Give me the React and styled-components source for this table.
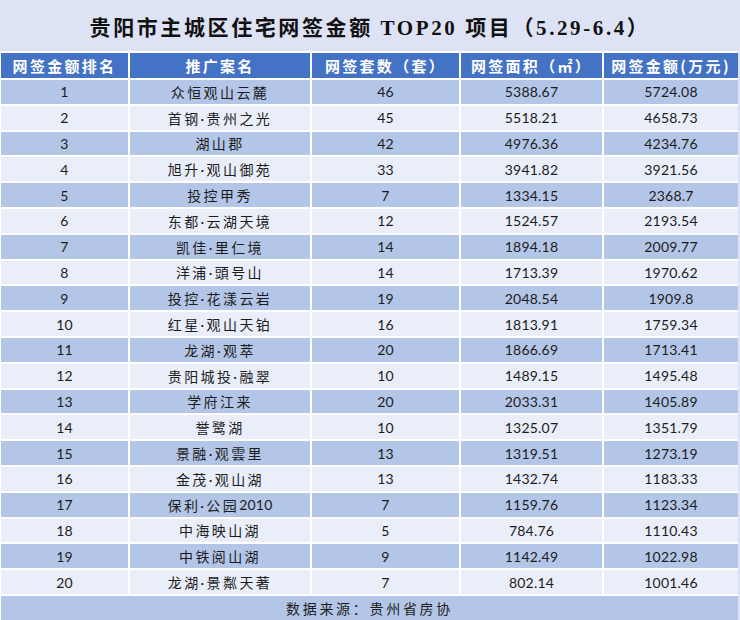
import React from "react";
import styled, { createGlobalStyle } from "styled-components";

const rows = [
  ["1", "众恒观山云麓", "46", "5388.67", "5724.08"],
  ["2", "首钢·贵州之光", "45", "5518.21", "4658.73"],
  ["3", "湖山郡", "42", "4976.36", "4234.76"],
  ["4", "旭升·观山御苑", "33", "3941.82", "3921.56"],
  ["5", "投控甲秀", "7", "1334.15", "2368.7"],
  ["6", "东都·云湖天境", "12", "1524.57", "2193.54"],
  ["7", "凯佳·里仁境", "14", "1894.18", "2009.77"],
  ["8", "洋浦·頭号山", "14", "1713.39", "1970.62"],
  ["9", "投控·花漾云岩", "19", "2048.54", "1909.8"],
  ["10", "红星·观山天铂", "16", "1813.91", "1759.34"],
  ["11", "龙湖·观萃", "20", "1866.69", "1713.41"],
  ["12", "贵阳城投·融翠", "10", "1489.15", "1495.48"],
  ["13", "学府江来", "20", "2033.31", "1405.89"],
  ["14", "誉鹭湖", "10", "1325.07", "1351.79"],
  ["15", "景融·观雲里", "13", "1319.51", "1273.19"],
  ["16", "金茂·观山湖", "13", "1432.74", "1183.33"],
  ["17", "保利·公园2010", "7", "1159.76", "1123.34"],
  ["18", "中海映山湖", "5", "784.76", "1110.43"],
  ["19", "中铁阅山湖", "9", "1142.49", "1022.98"],
  ["20", "龙湖·景粼天著", "7", "802.14", "1001.46"],
];

const heads = ["网签金额排名", "推广案名", "网签套数（套）", "网签面积（㎡）", "网签金额(万元)"];

const GlobalStyle = createGlobalStyle`
  body {
    margin: 0;
    background: #dde3f4;
  }
`;

const Page = styled.div`
  width: 740px;
  height: 620px;
  background: #dde3f4;
  font-family: "Lato", "Noto Sans CJK SC", sans-serif;
  color: #1c1c1c;
  overflow: hidden;
`;

const Title = styled.h1`
  margin: 0;
  height: 51px;
  display: flex;
  align-items: center;
  justify-content: center;
  font-family: "Liberation Serif", "Noto Sans CJK SC", serif;
  font-size: 21px;
  font-weight: 700;
  letter-spacing: 2.6px;
  color: #111;
`;

const Table = styled.div`
  display: grid;
  grid-template-columns: 127px 180px 147px 141px 134px;
  grid-template-rows: 25px;
  grid-auto-rows: 23.8px;
  gap: 2px;
  width: 738px;
  padding: 2px 0 2px 1px;
  box-sizing: border-box;
  background: #fff;
`;

const HeadCell = styled.div`
  background: #4472c4;
  color: #fff;
  font-family: "Noto Sans CJK SC", sans-serif;
  font-weight: 700;
  font-size: 15px;
  letter-spacing: 2.3px;
  display: flex;
  align-items: center;
  justify-content: center;
`;

const Cell = styled.div`
  background: ${(p) => (p.$alt ? "#b4c6e7" : "#e9eef9")};
  font-size: 14px;
  letter-spacing: ${(p) => (p.$name ? "2.4px" : "0.2px")};
  display: flex;
  align-items: center;
  justify-content: center;
`;

const Digits = styled.span`
  letter-spacing: 0.2px;
`;

const Footer = styled.div`
  grid-column: 1 / -1;
  height: 24px;
  background: #b4c6e7;
  font-size: 14px;
  letter-spacing: 2.7px;
  display: flex;
  align-items: center;
  justify-content: center;
`;

// digits inside a name keep the tight spacing of the number columns
const renderName = (text) =>
  text.split(/(\d+)/).map((part, k) =>
    /^\d+$/.test(part) ? <Digits key={k}>{part}</Digits> : part
  );

export default function App() {
  return (
    <Page>
      <GlobalStyle />
      <Title>贵阳市主城区住宅网签金额 TOP20 项目（5.29-6.4）</Title>
      <Table>
        {heads.map((h) => (
          <HeadCell key={h}>{h}</HeadCell>
        ))}
        {rows.map((r, i) =>
          r.map((v, j) => (
            <Cell key={i + "-" + j} $alt={i % 2 === 0} $name={j === 1}>
              {j === 1 ? renderName(v) : v}
            </Cell>
          ))
        )}
        <Footer>数据来源：贵州省房协</Footer>
      </Table>
    </Page>
  );
}
